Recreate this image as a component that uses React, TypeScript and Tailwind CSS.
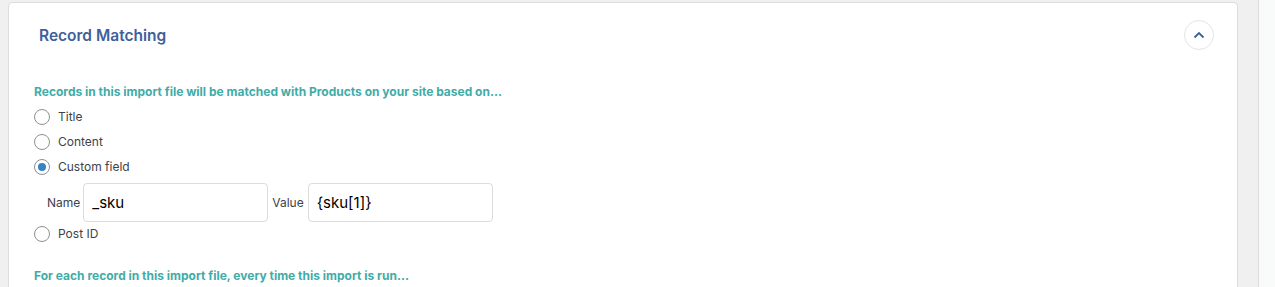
import React, { useState } from 'react';

const options = [
  { id: 'title', label: 'Title' },
  { id: 'content', label: 'Content' },
  { id: 'custom', label: 'Custom field' },
  { id: 'postid', label: 'Post ID' },
];

const Radio: React.FC<{ checked: boolean; onClick: () => void }> = ({ checked, onClick }) => (
  <span
    onClick={onClick}
    className="flex items-center justify-center w-4 h-4 rounded-full border border-[#8c8f94] bg-white shrink-0"
  >
    {checked && <span className="w-2 h-2 rounded-full bg-[#3582c4]" />}
  </span>
);

export default function App() {
  const [selected, setSelected] = useState('custom');
  const [name, setName] = useState('_sku');
  const [value, setValue] = useState('{sku[1]}');

  return (
    <div
      className="flex h-[287px] w-[1275px] bg-[#f0f0f1] overflow-hidden"
      style={{ fontFamily: 'Inter, "Liberation Sans", sans-serif' }}
    >
      <div className="pl-2 pt-[2px] w-[1238px] shrink-0">
        {/* Card */}
        <div className="h-[300px] bg-white border border-[#dcdcde] rounded-[4px]">
          {/* Header */}
          <div className="flex items-center justify-between h-[63px] pl-[30px] pr-[23px]">
            <h3 className="mt-[2px] text-[15.5px] font-semibold text-[#40609a]">Record Matching</h3>
            <button className="flex items-center justify-center w-[30px] h-[30px] rounded-full border border-[#e2e4e7] bg-white">
              <svg width="12" height="8" viewBox="0 0 12 8" fill="none">
                <path d="M1.5 6.5L6 2l4.5 4.5" stroke="#40609a" strokeWidth="1.8" />
              </svg>
            </button>
          </div>

          {/* Body */}
          <div className="pl-[25px] pt-[17px]">
            <p className="text-[12px] font-bold text-[#40aca8] leading-[18px]">
              Records in this import file will be matched with Products on your site based on...
            </p>
            <div className="mt-[3px] flex flex-col">
              {options.map((opt) => (
                <React.Fragment key={opt.id}>
                  <label
                    className={`flex items-center gap-2 h-[25px] cursor-pointer text-[12px] text-[#3c434a] ${
                      opt.id === 'custom' ? 'pt-[1px]' : ''
                    }`}
                  >
                    <Radio checked={selected === opt.id} onClick={() => setSelected(opt.id)} />
                    <span>{opt.label}</span>
                  </label>
                  {opt.id === 'custom' && (
                    <div className="flex items-start pl-[13px] h-[42px] pt-[4px] text-[12px] text-[#3c434a]">
                      <span className="mr-[3px] leading-[39px]">Name</span>
                      <input
                        value={name}
                        onChange={(e) => setName(e.target.value)}
                        className="w-[185px] h-[39px] px-[8px] border border-[#dcdcde] rounded-[4px] text-[15px] text-black outline-none"
                      />
                      <span className="ml-[4px] mr-[4px] leading-[39px]">Value</span>
                      <input
                        value={value}
                        onChange={(e) => setValue(e.target.value)}
                        className="w-[185px] h-[39px] px-[8px] border border-[#dcdcde] rounded-[4px] text-[15px] text-black outline-none"
                      />
                    </div>
                  )}
                </React.Fragment>
              ))}
            </div>
            <p className="mt-[21px] text-[12px] font-bold text-[#40aca8] leading-[18px]">
              For each record in this import file, every time this import is run...
            </p>
          </div>
        </div>
      </div>
      <div className="w-[21px] shrink-0 border-r border-[#dcdcde]" />
      <div className="flex-1 bg-[#f9fafa]" />
    </div>
  );
}
